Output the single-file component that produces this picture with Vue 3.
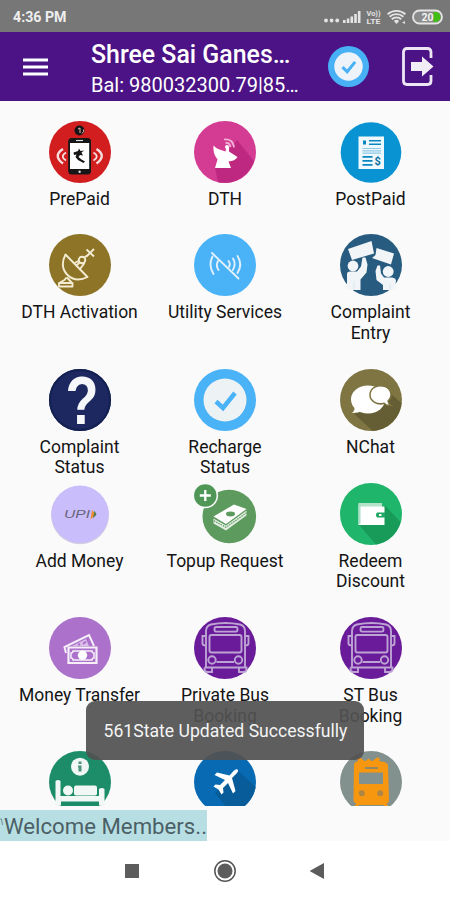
<template>
  <div class="screen">
    <div class="status-bar">
      <span class="time">4:36 PM</span>
      <svg class="status-icons" width="124" height="20" viewBox="0 0 124 20">
        <g fill="#e4e4e4">
          <circle cx="3" cy="13.5" r="1.9" />
          <circle cx="8.6" cy="13.5" r="1.9" />
          <circle cx="14.2" cy="13.5" r="1.9" />
          <path d="M20 13h2.6v3H20zM23.8 11.5h2.6V16h-2.6zM27.5 9.5h2.6V16h-2.6zM31.2 7h2.6v9h-2.6zM34.9 4h2.6v12h-2.6z" />
          <text x="43.5" y="8.5" font-size="7" font-weight="700" textLength="14" lengthAdjust="spacingAndGlyphs">Vo))</text>
          <text x="43.5" y="16.8" font-size="8" font-weight="700" textLength="14" lengthAdjust="spacingAndGlyphs">LTE</text>
          <path d="M73.5 17l-2.6-3.1a4 4 0 0 1 5.200 0z" />
        </g>
        <g fill="none" stroke="#e4e4e4" stroke-width="1.9">
          <path d="M68.800 12.200a7 7 0 0 1 9.400 0M66.600 9.700a10.500 10.500 0 0 1 13.800 0M64.600 7.200a13.500 13.500 0 0 1 17.800 0" />
        </g>
        <path d="M79 15.500l3-1.500v3z" fill="#ddd" />
        <rect x="90" y="3.500" width="29" height="13" rx="6.500" fill="#8b8b8b" stroke="#e4e4e4" stroke-width="1.800" />
        <path d="M110.500 5h2a5 5 0 0 1 0 10h-2z" fill="#3fbf14" />
        <text x="98.500" y="13.600" font-size="10.500" font-weight="700" fill="#f2f2f2">20</text>
      </svg>
    </div>

    <header class="app-bar">
      <svg class="menu" width="25" height="18" viewBox="0 0 25 18">
        <path d="M0 2h25M0 9h25M0 16h25" stroke="#fff" stroke-width="3" />
      </svg>
      <div class="account">
        <div class="shop">Shree Sai Ganes…</div>
        <div class="balance">Bal: 980032300.79|85…</div>
      </div>
      <svg class="verified" width="41" height="41" viewBox="0 0 62 62">
        <circle cx="31" cy="31" r="31" fill="#48b0f5" />
        <circle cx="31" cy="31" r="21.500" fill="#edf3f8" />
        <path d="M22 32l7 7 12-15" fill="none" stroke="#48b0f5" stroke-width="4.500" />
      </svg>
      <svg class="logout" width="32" height="39" viewBox="0 0 32 39">
        <path d="M29 11V5q0-3.500-3.500-3.500H5Q1.500 1.500 1.500 5v29q0 3.500 3.500 3.500h20.500q3.500 0 3.500-3.500v-6" fill="none" stroke="#ece6f5" stroke-width="2.800" />
        <path d="M9 15h11V9.500L31.500 19.500 20 29.500V24H9z" fill="#f1edf7" />
      </svg>
    </header>

    <main class="services">
      <div v-for="item in services" :key="item.icon + item.label" class="service">
        <svg class="icon" width="62" height="62" viewBox="0 0 62 62">
          <circle v-if="item.color" cx="31" cy="31" r="31" :fill="item.color" />

          <template v-if="item.icon === 'prepaid'">
            <circle cx="30.500" cy="9.500" r="5" fill="#161616" />
            <path d="M29 8l2-1v5M33 12.500q2.500-2 1.500-4" fill="none" stroke="#e8b9b6" stroke-width="1" />
            <rect x="19.200" y="17" width="22.800" height="36.500" rx="3.500" fill="#161616" />
            <rect x="21" y="22" width="19.200" height="26" fill="#fff" />
            <path d="M27 19.500h7" stroke="#ddd" stroke-width="1.200" />
            <circle cx="30.600" cy="50.800" r="1.200" fill="#ddd" />
            <path d="M24.500 31.500l4.500-1.500 1-2.500 1.500 2.500 3.500-.5-2.500 2 1.500 3-3-.5-1.500 2 3 2.500 3.500 2-1.500 1.500-5.500-3-2.500-3 1-2.500-2.500.5z" fill="#161616" />
            <g fill="none" stroke="#f6dddd" stroke-width="2.400">
              <path d="M14 28q-10.500 6.500 0 14.500M47.500 28q10.500 6.500 0 14.500" />
              <path d="M17 31.500q-6.500 4 0 8M44.500 31.500q6.500 4 0 8" stroke-width="1.700" />
            </g>
          </template>

          <template v-else-if="item.icon === 'dth'">
            <path d="M43 19l17 21a31 31 0 0 1-36 21.200L21 47z" fill="#bf2880" />
            <path d="M19.500 24.500q2 2.500 6 4l6 2 1-4.500 2.500-.5v5l8.500 5.500q-2.500 4-9 4.500l2.500 6.500H21l2.500-8.500q-5-6-4-14z" fill="#fff" />
            <circle cx="33" cy="26" r="2" fill="#fff" />
            <path d="M31.500 22q4-1 5 4M30 18.500q9-1 10 8" fill="none" stroke="#f3b3d8" stroke-width="1.700" />
          </template>

          <template v-else-if="item.icon === 'postpaid'">
            <circle cx="31" cy="31.500" r="30.300" fill="#0a93d3" />
            <path d="M18.500 15.500h25.500v32.500H18.500z" fill="#eff8fd" />
            <path d="M23 19.500h3v4h-3zM29 19h12v1.500H29zM29 22.500h12v1.500H29zM22.500 35h10v1.800h-10zM22.500 39h10v1.800h-10zM22.500 43h10v1.800h-10z" fill="#0a86c1" />
            <path d="M22.500 27.500h18.500M22.500 29.800h18.500M22.500 32.100h18.500" stroke="#8dc7e3" stroke-width="1.200" />
            <text x="34.500" y="44" font-size="11" font-weight="700" fill="#0a6f9f">$</text>
          </template>

          <template v-else-if="item.icon === 'dish'">
            <g fill="none" stroke="#f3ecd2" stroke-width="1.900" stroke-linejoin="round">
              <path d="M16.500 20.500L38.500 43q-12 6-20.500-2.500Q10.500 32 16.500 20.500z" />
              <path d="M27.500 31.500l3-3M31 35l4.500-6M25.500 29l5-2.500" />
              <circle cx="33" cy="26" r="3.300" />
              <path d="M35.500 23.500l2.500-2M37.500 15.500l7.500 7M45 15l-7.500 7.500" />
              <path d="M11 48.500l4.500-2.500 2-2.500M10 49h13.500v3.500H10zM18 43.500l5 5.500" />
            </g>
          </template>

          <template v-else-if="item.icon === 'utility'">
            <g fill="none" stroke="#e0f1fd" stroke-width="1.900" stroke-linecap="round">
              <path d="M18 19l26.500 25.500" />
              <path d="M18.500 22.500q-4.500 8.500 1 17.500M24 27q-2.500 4.500.5 9" />
              <path d="M43.500 22q5.500 8.500 0 17M39 24.500q3.500 6-.2 11.500M34.500 27q2.500 3 .5 6" />
            </g>
          </template>

          <template v-else-if="item.icon === 'protest'">
            <g fill="#f1f5f7">
              <path d="M8 15l23.500-8 2.500 12.500L12 26zM36.500 14L54 19.500l-3 11-19-6.500 3.500-3z" />
              <circle cx="13" cy="32" r="5.400" />
              <circle cx="48.200" cy="37.500" r="5.400" />
              <path d="M7 40q0-2.500 3-2.500h7l4-5 1.500-9h3l2 7-1 8-6 7v10.500H8q-2-.5-1-5z" />
              <path d="M56 46q-1-2.500-4-2.500h-8l-3-4-1-8h-2.500L35.500 37l1 9 6.500 5v5h12z" />
            </g>
            <path d="M14 47v9M50 50v6" stroke="#d8e2e8" stroke-width=".8" />
          </template>

          <template v-else-if="item.icon === 'question'">
            <circle cx="31" cy="31" r="30" fill="none" stroke="#132052" stroke-width="2" />
            <text class="question" x="16.5" y="55" textLength="33" lengthAdjust="spacingAndGlyphs">?</text>
          </template>

          <template v-else-if="item.icon === 'check'">
            <circle cx="31" cy="31" r="21.500" fill="#edf2f5" />
            <path d="M22 32.500l7 6.500 12-15" fill="none" stroke="#4ab2f6" stroke-width="4.500" />
          </template>

          <template v-else-if="item.icon === 'chat'">
            <path d="M51 25l10.500 9A31 31 0 0 1 33 62L14 45z" fill="#655d33" />
            <ellipse cx="28" cy="30.500" rx="17" ry="14" fill="#fff" />
            <path d="M14.500 36q1 5-2.500 8 6.500 0 11-2.500z" fill="#fff" />
            <path d="M30 25.500a10.500 9 0 1 1 18 6.500q.5 3 3 4.500-5 .5-7-2.200a10.500 9 0 0 1-14-8.800z" fill="#fff" stroke="#7b7140" stroke-width="1.500" />
          </template>

          <template v-else-if="item.icon === 'upi'">
            <circle cx="31" cy="32.500" r="28.800" fill="#d2cfda" />
            <circle cx="31" cy="31.300" r="28.800" fill="#cabdfb" />
            <text class="upi" x="15" y="35.300" textLength="26" lengthAdjust="spacingAndGlyphs">UPI</text>
            <path d="M43 27l3.500 4.500-5 5z" fill="#f08a2c" />
            <path d="M45.500 27.500l2 4-3.500 4z" fill="#517847" />
          </template>

          <template v-else-if="item.icon === 'topup'">
            <circle cx="35.300" cy="33.500" r="26.800" fill="#5c9a5e" />
            <circle cx="11.300" cy="12.500" r="12.800" fill="#fafafa" />
            <circle cx="11.300" cy="12.500" r="11.200" fill="#4f9657" />
            <path d="M11.300 7v11M5.800 12.500h11" stroke="#fff" stroke-width="2.300" />
            <path d="M19.500 33.500L40 21.500l12.500 4.500L32 41z" fill="#fff" />
            <ellipse cx="36.500" cy="31" rx="4.500" ry="2.400" fill="#5c9a5e" />
            <path d="M19.500 35.500L32 42.500l20.500-15v5L32 47.500l-12.500-7z" fill="#e0ecdf" />
            <path d="M20 37.800l12 6.500 20.500-14.500" fill="none" stroke="#5c9a5e" stroke-width="1.100" stroke-dasharray="1.500 1" />
          </template>

          <template v-else-if="item.icon === 'wallet'">
            <path d="M45 22.500L60.500 39A31 31 0 0 1 36 61.500L19 42z" fill="#189a58" />
            <path d="M18.500 20h23.500v5H18.500z" fill="#b4e3cc" />
            <path d="M18.500 23.500h26v18.500h-26z" fill="#fff" />
            <path d="M19.500 21v20" stroke="#a9dec4" stroke-width="2" />
            <path d="M37 29.500h8v5h-8q-2-2.500 0-5z" fill="#1fa765" />
            <path d="M39 31h2.500v2H39z" fill="#fff" />
          </template>

          <template v-else-if="item.icon === 'money'">
            <path d="M17 36l-1.500-6L40 18l5 11" fill="none" stroke="#f6effa" stroke-width="2" />
            <path d="M23 29l14-7 3 7z" fill="#dabfe7" />
            <path d="M34 27l3-2.500M29 28l2-1" stroke="#ab71cb" stroke-width="2" />
            <path d="M19.500 30.500h28v15.500h-28z" fill="#ab71cb" stroke="#f6effa" stroke-width="2.200" />
            <path d="M24 34h19q0 2 2 2v5q-2 0-2 2H24q0-2-2-2v-5q2 0 2-2z" fill="none" stroke="#f6effa" stroke-width="1.500" />
            <circle cx="33.500" cy="38.300" r="4.700" fill="#fff" />
          </template>

          <template v-else-if="item.icon === 'bus'">
            <g fill="none" stroke="#bda3d4" stroke-width="1.900">
              <path d="M12 51V14q0-5 5-6.500 14.500-3 29 0 5 1.500 5 6.500v37" />
              <path d="M22 10h20q1.500 0 1.500 2.300t-1.500 2.300H22q-1.500 0-1.500-2.300T22 10z" />
              <rect x="15.500" y="18" width="32" height="17.500" rx="2" />
              <path d="M12 19H8.500v7.500q0 2 3.500 2M51 19h3.500v7.500q0 2-3.500 2" />
              <path d="M10.500 50.500h42v1.500q0 3-3 3H45v-4M10.500 50.500v1.500q0 3 3 3H18v-4M22.500 45H40" />
              <circle cx="18" cy="43" r="3.700" />
              <circle cx="44.500" cy="43" r="3.700" />
            </g>
          </template>

          <template v-else-if="item.icon === 'hotel'">
            <circle cx="31" cy="15.700" r="9" fill="#f0f7f4" />
            <path d="M29.500 10.500h3v2.500h-3zM29 14.500h3.500v6h-3v-4H29z" fill="#49947b" />
            <path d="M6.500 30q2.500-2 5 0v15h38.500v-7q3-2 5.500 0v16H50v-3.500H12V54H6.500z" fill="#f0f7f4" />
            <circle cx="19" cy="39.500" r="5" fill="#f0f7f4" />
            <rect x="25" y="34.500" width="23" height="10" rx="2" fill="#f0f7f4" />
            <path d="M7 51.500h5v3H7zM50 51.500h5v3h-5z" fill="#f0f7f4" />
          </template>

          <template v-else-if="item.icon === 'plane'">
            <path d="M43.500 19L61.600 36A31 31 0 0 1 37 61.400L21 42z" fill="#075c99" />
            <path d="M43.500 18.500q1.500 1.500-1 4l-4.500 4.500 3.500 13-2.500 2.500-5-10.500-5 5 .5 4.500-2 2-3-5-5-3 2-2 4.500.5 5-5L20.500 24l2.500-2.500 12.500 3 4-4.500q2.500-2.500 4-1.500z" fill="#fff" />
          </template>

          <template v-else-if="item.icon === 'train'">
            <path d="M14 14q0-3 4-4l-1-2 2.500-2 5 4h1l3-2.500L31.500 10h1l5-4L40 8l-1 2 5 1q4 1 4 4l1 34q0 3-2.500 3.500l3 5h-4L44 54H19l-2 3.500h-4l3.500-5Q13.500 52 13.500 48z" fill="#f7960f" />
            <path d="M25 16h13v2H25zM19 21.500h24V33H19z" fill="#83918e" />
            <path d="M25 17h13" stroke="#a77c38" stroke-width="1" />
            <circle cx="21.800" cy="42.300" r="3" fill="#ad8645" />
            <circle cx="40.200" cy="42.300" r="3" fill="#ad8645" />
          </template>
        </svg>
        <div v-if="item.label" class="label">
          <div v-for="line in item.label.split('\n')" :key="line">{{ line }}</div>
        </div>
      </div>
    </main>

    <div class="ticker">
      <div class="ticker-text">
        <svg width="4" height="31" viewBox="0 0 4 31"><path d="M0 9h1.500l1 6" fill="none" stroke="#6e8f95" stroke-width="1" /></svg>
        <span>Welcome Members..</span>
      </div>
    </div>

    <nav class="nav-bar">
      <svg width="16" height="16" viewBox="0 0 16 16"><path d="M1 1h14v14H1z" fill="#5c5c5c" /></svg>
      <svg width="24" height="24" viewBox="0 0 24 24">
        <circle cx="12" cy="12" r="10.200" fill="none" stroke="#555" stroke-width="1.500" />
        <circle cx="12" cy="12" r="7.500" fill="#5c5c5c" />
      </svg>
      <svg width="16" height="18" viewBox="0 0 16 18"><path d="M14 1v16L-.5 9z" fill="#5c5c5c" /></svg>
    </nav>

    <div class="toast">561State Updated Successfully</div>
  </div>
</template>

<script setup>
import { ref } from 'vue'

// the last row is cut by the ticker, so its items carry no label
const services = ref([
  { label: 'PrePaid', icon: 'prepaid', color: '#d21e1f' },
  { label: 'DTH', icon: 'dth', color: '#d43b92' },
  { label: 'PostPaid', icon: 'postpaid' },
  { label: 'DTH Activation', icon: 'dish', color: '#8e7427' },
  { label: 'Utility Services', icon: 'utility', color: '#4ab2f6' },
  { label: 'Complaint\nEntry', icon: 'protest', color: '#285b80' },
  { label: 'Complaint\nStatus', icon: 'question', color: '#1d2760' },
  { label: 'Recharge\nStatus', icon: 'check', color: '#4ab2f6' },
  { label: 'NChat', icon: 'chat', color: '#7f7543' },
  { label: 'Add Money', icon: 'upi' },
  { label: 'Topup Request', icon: 'topup' },
  { label: 'Redeem\nDiscount', icon: 'wallet', color: '#1fb56b' },
  { label: 'Money Transfer', icon: 'money', color: '#ab71cb' },
  { label: 'Private Bus\nBooking', icon: 'bus', color: '#6a1b9a' },
  { label: 'ST Bus\nBooking', icon: 'bus', color: '#6a1b9a' },
  { label: '', icon: 'hotel', color: '#1c8d68' },
  { label: '', icon: 'plane', color: '#076ab3' },
  { label: '', icon: 'train', color: '#83918e' }
])
</script>

<style>
body {
  margin: 0;
}
</style>

<style scoped>
.screen {
  position: relative;
  display: flex;
  flex-direction: column;
  width: 450px;
  height: 900px;
  overflow: hidden;
  background: #fafafa;
  font-family: Roboto, "Liberation Sans", sans-serif;
}

svg {
  display: block;
  flex: none;
}

.status-bar {
  display: flex;
  flex: none;
  align-items: center;
  justify-content: space-between;
  box-sizing: border-box;
  height: 32px;
  padding: 1px 10px 0 13px;
  background: #777;
}

.time {
  color: #eee;
  font-size: 14.2px;
  font-weight: 700;
}

.status-icons {
  margin-right: -7px;
}

.app-bar {
  display: flex;
  flex: none;
  align-items: center;
  box-sizing: border-box;
  height: 69px;
  padding: 0 16px 0 23px;
  background: #4b1386;
}

.account {
  width: 215px;
  margin-left: 43px;
  padding-top: 6px;
  color: #fff;
  white-space: nowrap;
}

.shop {
  font-size: 24.9px;
  font-weight: 500;
  line-height: 30px;
}

.balance {
  font-size: 20px;
  line-height: 30px;
}

.verified {
  margin-left: 22px;
}

.logout {
  margin-left: 33px;
}

.services {
  display: grid;
  grid-template-columns: repeat(3, 145.5px);
  grid-template-rows: 113.5px 134.5px 114px 134.5px 134px 134px;
  flex: none;
  justify-content: center;
  box-sizing: border-box;
  height: 704.5px;
  padding-top: 19.5px;
  overflow: hidden;
}

.service {
  display: flex;
  flex-direction: column;
  align-items: center;
}

.icon {
  overflow: visible;
}

.label {
  margin-top: 6px;
  color: #141414;
  font-size: 17.5px;
  line-height: 20.5px;
  text-align: center;
  white-space: nowrap;
}

.question {
  fill: #f5f7fa;
  font-family: "Liberation Sans", sans-serif;
  font-size: 69px;
  font-weight: 700;
}

.upi {
  fill: #68647b;
  font-family: "Liberation Sans", sans-serif;
  font-size: 11px;
  font-style: italic;
}

.ticker {
  flex: none;
  height: 31px;
  margin-top: 4.5px;
}

.ticker-text {
  display: flex;
  width: 207px;
  height: 31px;
  background: #b7dfe3;
  color: #4c5f66;
  font-size: 22.2px;
  line-height: 33px;
  white-space: nowrap;
}

.nav-bar {
  display: flex;
  flex: 1;
  align-items: center;
  justify-content: center;
  gap: 73px;
  background: #fff;
}

.toast {
  position: absolute;
  top: 701px;
  left: 86px;
  width: 278px;
  height: 59px;
  border-radius: 9px;
  background: rgba(82, 82, 82, 0.93);
  color: #f4f4f4;
  font-size: 17.6px;
  line-height: 60px;
  text-align: center;
  text-indent: 1px;
  white-space: nowrap;
}
</style>
